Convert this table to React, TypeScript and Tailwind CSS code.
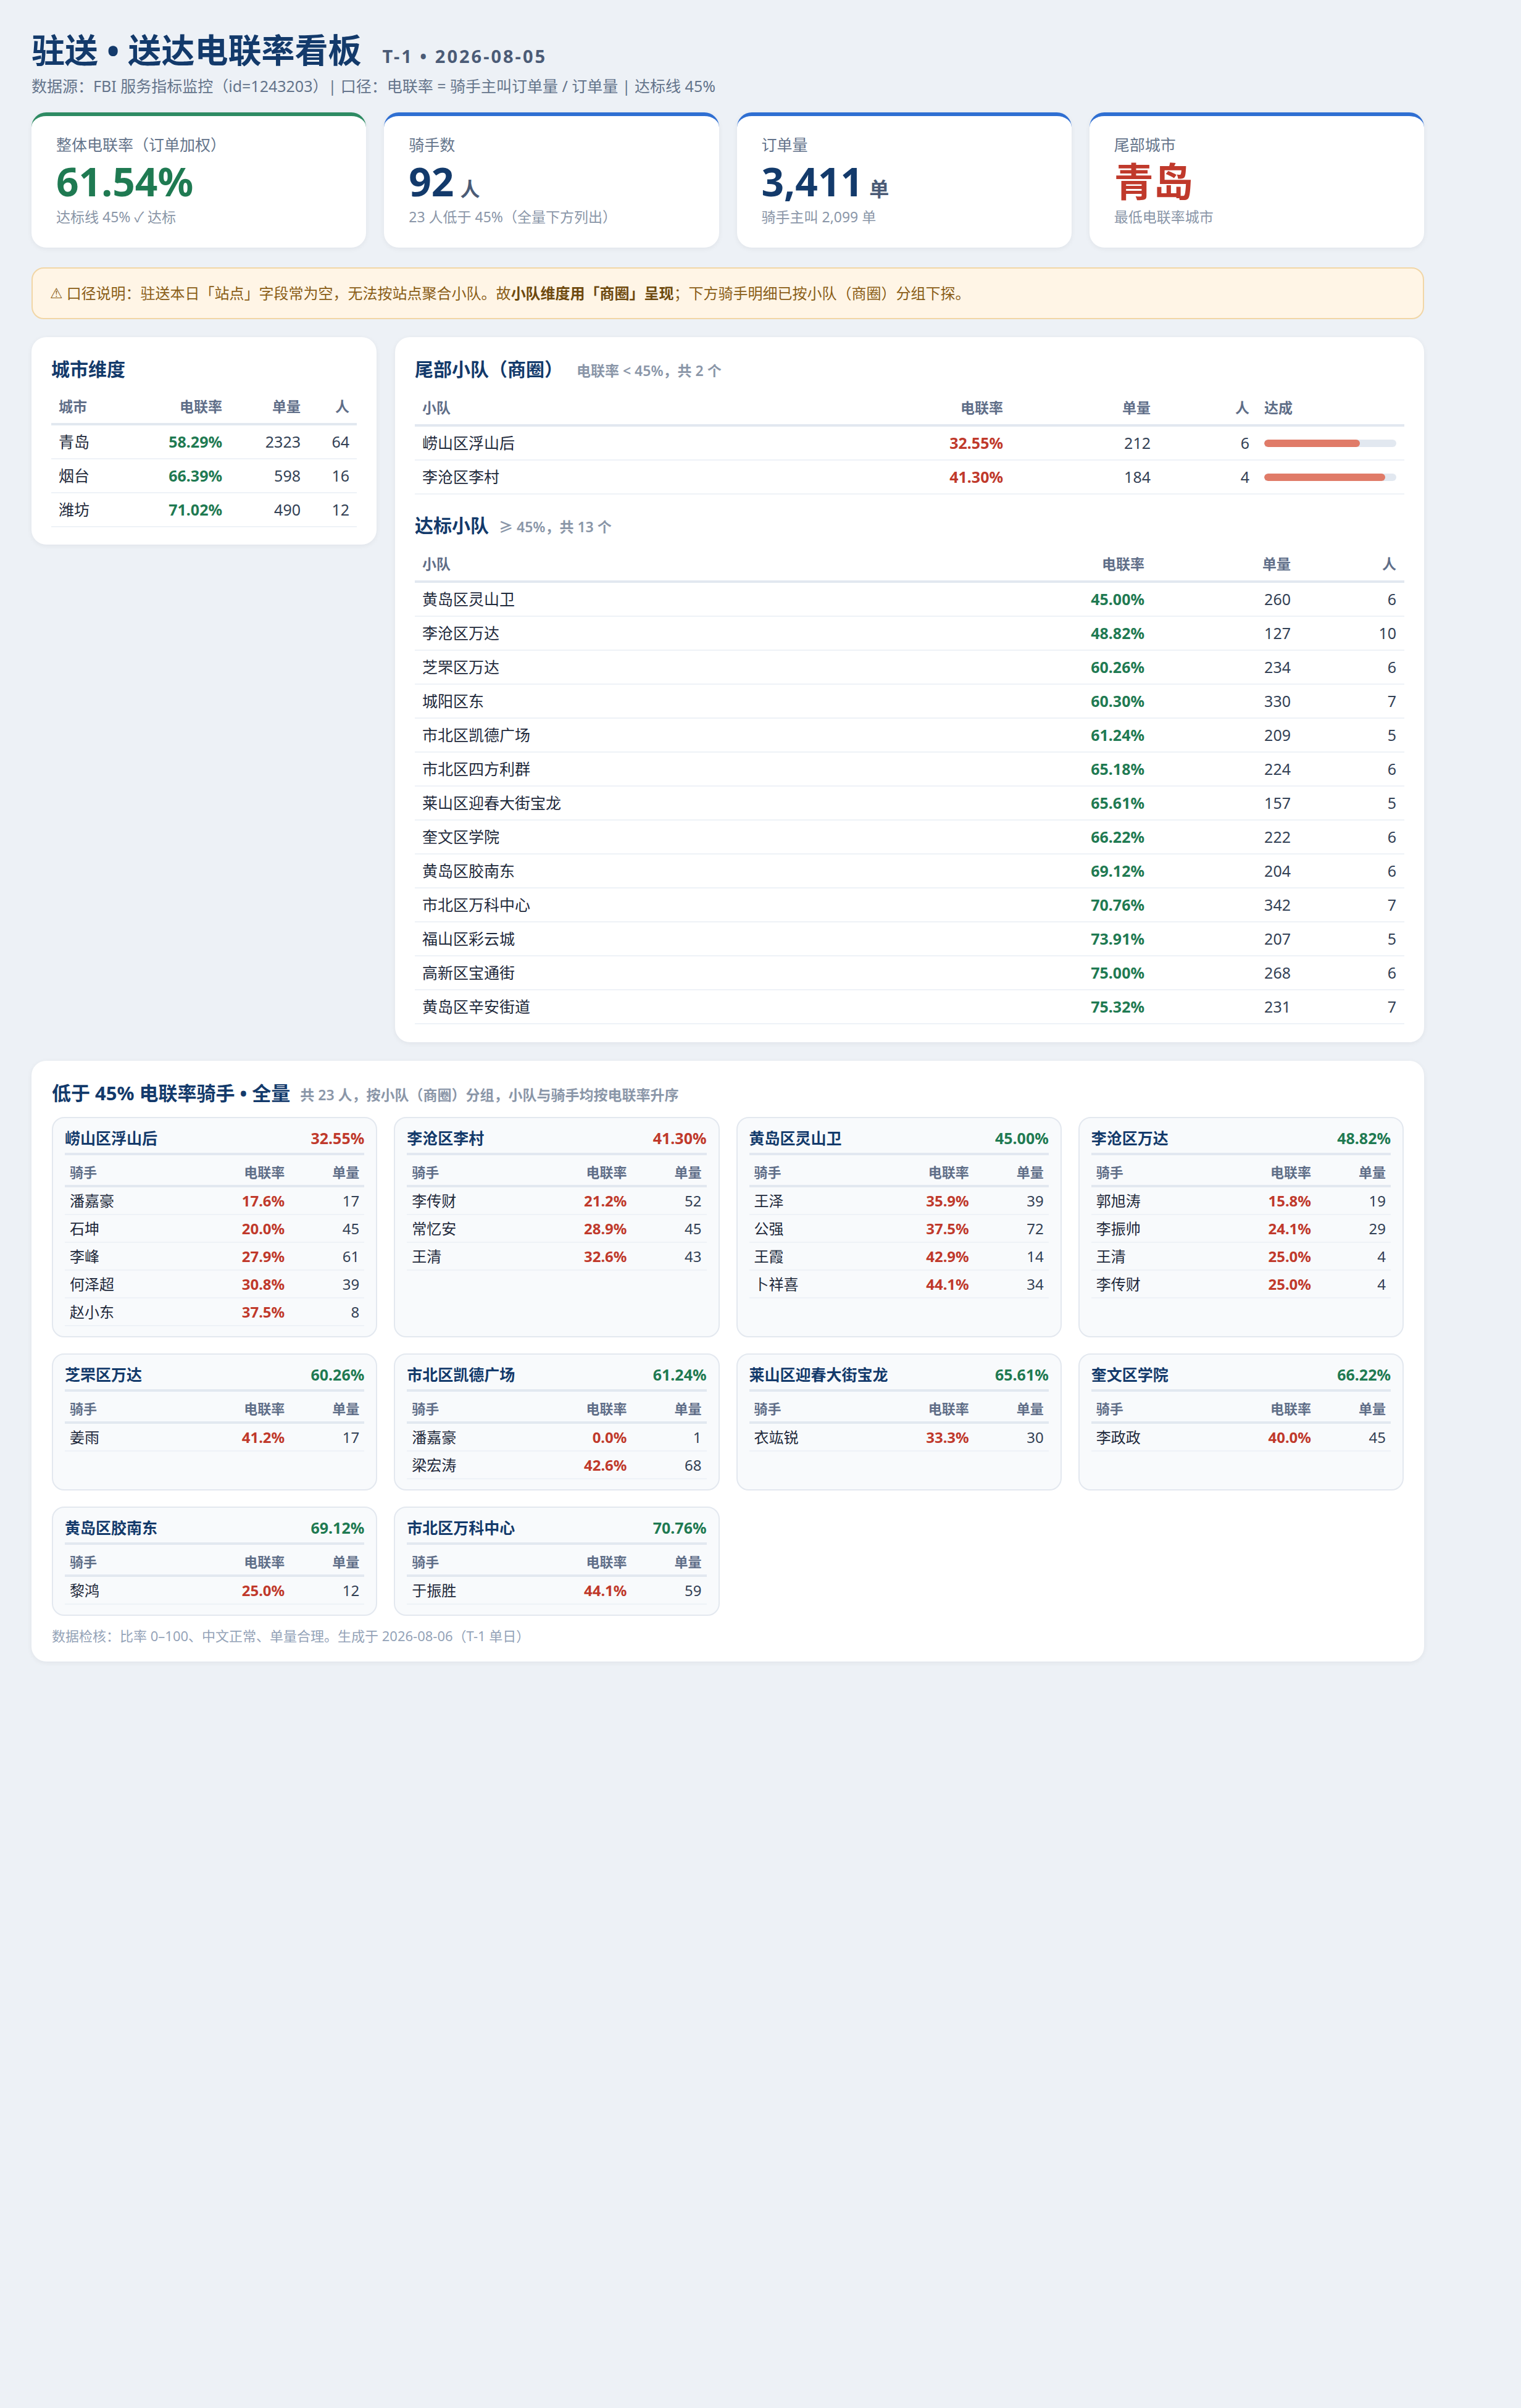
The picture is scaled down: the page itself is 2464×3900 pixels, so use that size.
import React from "react";

type Squad = { name: string; rate: string; orders: number; people: number };
type Rider = { name: string; rate: string; orders: number };
type Group = { name: string; rate: string; good: boolean; riders: Rider[] };

const cities = [
  { name: "青岛", rate: "58.29%", orders: 2323, people: 64 },
  { name: "烟台", rate: "66.39%", orders: 598, people: 16 },
  { name: "潍坊", rate: "71.02%", orders: 490, people: 12 },
];

const tailSquads = [
  { name: "崂山区浮山后", rate: "32.55%", orders: 212, people: 6, pct: 72.3 },
  { name: "李沧区李村", rate: "41.30%", orders: 184, people: 4, pct: 91.8 },
];

const okSquads: Squad[] = [
  { name: "黄岛区灵山卫", rate: "45.00%", orders: 260, people: 6 },
  { name: "李沧区万达", rate: "48.82%", orders: 127, people: 10 },
  { name: "芝罘区万达", rate: "60.26%", orders: 234, people: 6 },
  { name: "城阳区东", rate: "60.30%", orders: 330, people: 7 },
  { name: "市北区凯德广场", rate: "61.24%", orders: 209, people: 5 },
  { name: "市北区四方利群", rate: "65.18%", orders: 224, people: 6 },
  { name: "莱山区迎春大街宝龙", rate: "65.61%", orders: 157, people: 5 },
  { name: "奎文区学院", rate: "66.22%", orders: 222, people: 6 },
  { name: "黄岛区胶南东", rate: "69.12%", orders: 204, people: 6 },
  { name: "市北区万科中心", rate: "70.76%", orders: 342, people: 7 },
  { name: "福山区彩云城", rate: "73.91%", orders: 207, people: 5 },
  { name: "高新区宝通街", rate: "75.00%", orders: 268, people: 6 },
  { name: "黄岛区辛安街道", rate: "75.32%", orders: 231, people: 7 },
];

const groups: Group[] = [
  {
    name: "崂山区浮山后", rate: "32.55%", good: false,
    riders: [
      { name: "潘嘉豪", rate: "17.6%", orders: 17 },
      { name: "石坤", rate: "20.0%", orders: 45 },
      { name: "李峰", rate: "27.9%", orders: 61 },
      { name: "何泽超", rate: "30.8%", orders: 39 },
      { name: "赵小东", rate: "37.5%", orders: 8 },
    ],
  },
  {
    name: "李沧区李村", rate: "41.30%", good: false,
    riders: [
      { name: "李传财", rate: "21.2%", orders: 52 },
      { name: "常忆安", rate: "28.9%", orders: 45 },
      { name: "王清", rate: "32.6%", orders: 43 },
    ],
  },
  {
    name: "黄岛区灵山卫", rate: "45.00%", good: true,
    riders: [
      { name: "王泽", rate: "35.9%", orders: 39 },
      { name: "公强", rate: "37.5%", orders: 72 },
      { name: "王霞", rate: "42.9%", orders: 14 },
      { name: "卜祥喜", rate: "44.1%", orders: 34 },
    ],
  },
  {
    name: "李沧区万达", rate: "48.82%", good: true,
    riders: [
      { name: "郭旭涛", rate: "15.8%", orders: 19 },
      { name: "李振帅", rate: "24.1%", orders: 29 },
      { name: "王清", rate: "25.0%", orders: 4 },
      { name: "李传财", rate: "25.0%", orders: 4 },
    ],
  },
  { name: "芝罘区万达", rate: "60.26%", good: true, riders: [{ name: "姜雨", rate: "41.2%", orders: 17 }] },
  {
    name: "市北区凯德广场", rate: "61.24%", good: true,
    riders: [
      { name: "潘嘉豪", rate: "0.0%", orders: 1 },
      { name: "梁宏涛", rate: "42.6%", orders: 68 },
    ],
  },
  { name: "莱山区迎春大街宝龙", rate: "65.61%", good: true, riders: [{ name: "衣竑锐", rate: "33.3%", orders: 30 }] },
  { name: "奎文区学院", rate: "66.22%", good: true, riders: [{ name: "李政政", rate: "40.0%", orders: 45 }] },
  { name: "黄岛区胶南东", rate: "69.12%", good: true, riders: [{ name: "黎鸿", rate: "25.0%", orders: 12 }] },
  { name: "市北区万科中心", rate: "70.76%", good: true, riders: [{ name: "于振胜", rate: "44.1%", orders: 59 }] },
];

function KpiCard({ label, accent, children, note }: { label: string; accent: "green" | "blue"; children: React.ReactNode; note: string }) {
  return (
    <div
      className={`h-[219px] rounded-[24px] border-t-[6px] bg-white px-[40px] pt-[28px] shadow-[0_2px_8px_rgba(15,23,42,0.06)] ${
        accent === "green" ? "border-[#2e8b63]" : "border-[#2f6fd2]"
      }`}
    >
      <div className="text-[25px] leading-[36px] text-[#64748b]">{label}</div>
      <div className="mt-[6px] flex h-[72px] items-baseline gap-[10px]">{children}</div>
      <div className="mt-[6px] text-[23px] leading-[30px] text-[#8a96a8]">{note}</div>
    </div>
  );
}

export default function App() {
  return (
    <div className="min-h-screen bg-[#edf1f6] px-[51px] pt-[49px] pb-[80px] font-['Noto_Sans','Noto_Sans_CJK_SC',sans-serif] text-[#1e293b]">
      <div className="w-[2256px]">
        <header>
          <div className="flex items-baseline gap-[34px]">
            <h1 className="text-[54px] font-bold leading-[64px] text-[#133a6b]">驻送 • 送达电联率看板</h1>
            <span className="text-[29px] font-bold tracking-[3px] text-[#4b5b76]">T-1 • 2026-08-05</span>
          </div>
          <p className="mt-[9px] text-[25px] leading-[34px] text-[#64748b]">
            数据源：FBI 服务指标监控（id=1243203）| 口径：电联率 = 骑手主叫订单量 / 订单量 | 达标线 45%
          </p>
        </header>

        <section className="mt-[26px] grid grid-cols-4 gap-[29px]">
          <KpiCard label="整体电联率（订单加权）" accent="green" note="达标线 45% ✓ 达标">
            <span className="text-[64px] font-bold leading-[72px] text-[#1f7a52]">61.54%</span>
          </KpiCard>
          <KpiCard label="骑手数" accent="blue" note="23 人低于 45%（全量下方列出）">
            <span className="text-[64px] font-bold leading-[72px] text-[#133a6b]">92</span>
            <span className="text-[32px] font-bold text-[#4b5b76]">人</span>
          </KpiCard>
          <KpiCard label="订单量" accent="blue" note="骑手主叫 2,099 单">
            <span className="text-[64px] font-bold leading-[72px] text-[#133a6b]">3,411</span>
            <span className="text-[32px] font-bold text-[#4b5b76]">单</span>
          </KpiCard>
          <KpiCard label="尾部城市" accent="blue" note="最低电联率城市">
            <span className="text-[64px] font-bold leading-[72px] text-[#c0392b]">青岛</span>
          </KpiCard>
        </section>

        <div className="mt-[32px] flex h-[84px] items-center rounded-[20px] border-2 border-[#f1d6a6] bg-[#fff5e6] px-[28px] text-[24px] text-[#8a5d16]">
          <span className="mr-[6px] font-['DejaVu_Sans',sans-serif] text-[23px]">⚠</span>
          口径说明：驻送本日「站点」字段常为空，无法按站点聚合小队。故
          <b className="font-bold text-[#6e4a0e]">小队维度用「商圈」呈现</b>；下方骑手明细已按小队（商圈）分组下探。
        </div>

        <div className="mt-[29px] grid grid-cols-[559px_1fr] items-start gap-[30px]">
          <section className="rounded-[24px] bg-white px-[32px] pt-[32px] pb-[28px] shadow-[0_2px_8px_rgba(15,23,42,0.06)]">
            <h2 className="text-[30px] font-bold leading-[40px] text-[#133a6b]">城市维度</h2>
            <div className="mt-[14px]">
              <div className="grid h-[57px] grid-cols-[150px_139px_127px_79px] items-center border-b-4 border-[#e2e8f0] text-[23px] font-bold text-[#5f6e88]">
                <span className="pl-[12px]">城市</span>
                <span className="pr-[12px] text-right">电联率</span>
                <span className="pr-[12px] text-right">单量</span>
                <span className="pr-[12px] text-right">人</span>
              </div>
              {cities.map((c) => (
                <div key={c.name} className="grid h-[55px] grid-cols-[150px_139px_127px_79px] items-center border-b-2 border-[#eef2f7] text-[25px]">
                  <span className="pl-[12px]">{c.name}</span>
                  <span className="pr-[12px] text-right font-bold text-[#1f7a52]">{c.rate}</span>
                  <span className="pr-[12px] text-right text-[#334155]">{c.orders}</span>
                  <span className="pr-[12px] text-right text-[#334155]">{c.people}</span>
                </div>
              ))}
            </div>
          </section>

          <section className="rounded-[24px] bg-white px-[32px] pt-[32px] pb-[29px] shadow-[0_2px_8px_rgba(15,23,42,0.06)]">
            <h2 className="flex items-baseline gap-[22px] text-[30px] font-bold leading-[40px] text-[#133a6b]">
              尾部小队（商圈）
              <span className="text-[23px] font-semibold text-[#8a96a8]">电联率 &lt; 45%，共 2 个</span>
            </h2>
            <div className="mt-[14px]">
              <div className="grid h-[57px] grid-cols-[700px_265px_239px_160px_238px] items-center border-b-4 border-[#e2e8f0] text-[23px] font-bold text-[#5f6e88]">
                <span className="pl-[12px]">小队</span>
                <span className="pr-[12px] text-right">电联率</span>
                <span className="pr-[12px] text-right">单量</span>
                <span className="pr-[12px] text-right">人</span>
                <span className="pl-[12px]">达成</span>
              </div>
              {tailSquads.map((s) => (
                <div key={s.name} className="grid h-[55px] grid-cols-[700px_265px_239px_160px_238px] items-center border-b-2 border-[#eef2f7] text-[25px]">
                  <span className="pl-[12px]">{s.name}</span>
                  <span className="pr-[12px] text-right font-bold text-[#c0392b]">{s.rate}</span>
                  <span className="pr-[12px] text-right text-[#334155]">{s.orders}</span>
                  <span className="pr-[12px] text-right text-[#334155]">{s.people}</span>
                  <span className="px-[12px]">
                    <span className="block h-[12px] overflow-hidden rounded-full bg-[#e2e8f0]">
                      <span className="block h-full rounded-full bg-[#e07b68]" style={{ width: `${s.pct}%` }} />
                    </span>
                  </span>
                </div>
              ))}
            </div>

            <h2 className="mt-[30px] flex items-baseline gap-[16px] text-[30px] font-bold leading-[40px] text-[#133a6b]">
              达标小队
              <span className="text-[23px] font-semibold text-[#8a96a8]">≥ 45%，共 13 个</span>
            </h2>
            <div className="mt-[14px]">
              <div className="grid h-[57px] grid-cols-[994px_200px_237px_171px] items-center border-b-4 border-[#e2e8f0] text-[23px] font-bold text-[#5f6e88]">
                <span className="pl-[12px]">小队</span>
                <span className="pr-[12px] text-right">电联率</span>
                <span className="pr-[12px] text-right">单量</span>
                <span className="pr-[12px] text-right">人</span>
              </div>
              {okSquads.map((s) => (
                <div key={s.name} className="grid h-[55px] grid-cols-[994px_200px_237px_171px] items-center border-b-2 border-[#eef2f7] text-[25px]">
                  <span className="pl-[12px]">{s.name}</span>
                  <span className="pr-[12px] text-right font-bold text-[#1f7a52]">{s.rate}</span>
                  <span className="pr-[12px] text-right text-[#334155]">{s.orders}</span>
                  <span className="pr-[12px] text-right text-[#334155]">{s.people}</span>
                </div>
              ))}
            </div>
          </section>
        </div>

        <section className="mt-[30px] rounded-[24px] bg-white px-[33px] pt-[32px] pb-[27px] shadow-[0_2px_8px_rgba(15,23,42,0.06)]">
          <h2 className="flex items-baseline gap-[16px] text-[31px] font-bold leading-[40px] text-[#133a6b]">
            低于 45% 电联率骑手 • 全量
            <span className="text-[23px] font-semibold text-[#8a96a8]">共 23 人，按小队（商圈）分组，小队与骑手均按电联率升序</span>
          </h2>
          <div className="mt-[16px] grid grid-cols-4 gap-x-[27px] gap-y-[26px]">
            {groups.map((g) => (
              <div key={g.name} className="rounded-[20px] border-2 border-[#e3e8ef] bg-[#f8fafc] px-[19px] pt-[16px] pb-[16px]">
                <div className="flex items-center justify-between border-b-4 border-[#e2e8f0] pb-[8px] text-[25px] font-bold leading-[32px]">
                  <span className="text-[#133a6b]">{g.name}</span>
                  <span className={g.good ? "text-[#1f7a52]" : "text-[#c0392b]"}>{g.rate}</span>
                </div>
                <div className="mt-[6px] grid h-[46px] grid-cols-[1fr_163px_121px] items-center border-b-4 border-[#e2e8f0] text-[22px] font-bold text-[#5f6e88]">
                  <span className="pl-[8px]">骑手</span>
                  <span className="pr-[8px] text-right">电联率</span>
                  <span className="pr-[8px] text-right">单量</span>
                </div>
                {g.riders.map((r) => (
                  <div key={r.name} className="grid h-[45px] grid-cols-[1fr_163px_121px] items-center border-b-2 border-[#eef2f7] text-[24px]">
                    <span className="pl-[8px]">{r.name}</span>
                    <span className="pr-[8px] text-right font-bold text-[#c0392b]">{r.rate}</span>
                    <span className="pr-[8px] text-right text-[#334155]">{r.orders}</span>
                  </div>
                ))}
              </div>
            ))}
          </div>
          <p className="mt-[17px] text-[22px] leading-[30px] text-[#94a3b8]">
            数据检核：比率 0–100、中文正常、单量合理。生成于 2026-08-06（T-1 单日）
          </p>
        </section>
      </div>
    </div>
  );
}
